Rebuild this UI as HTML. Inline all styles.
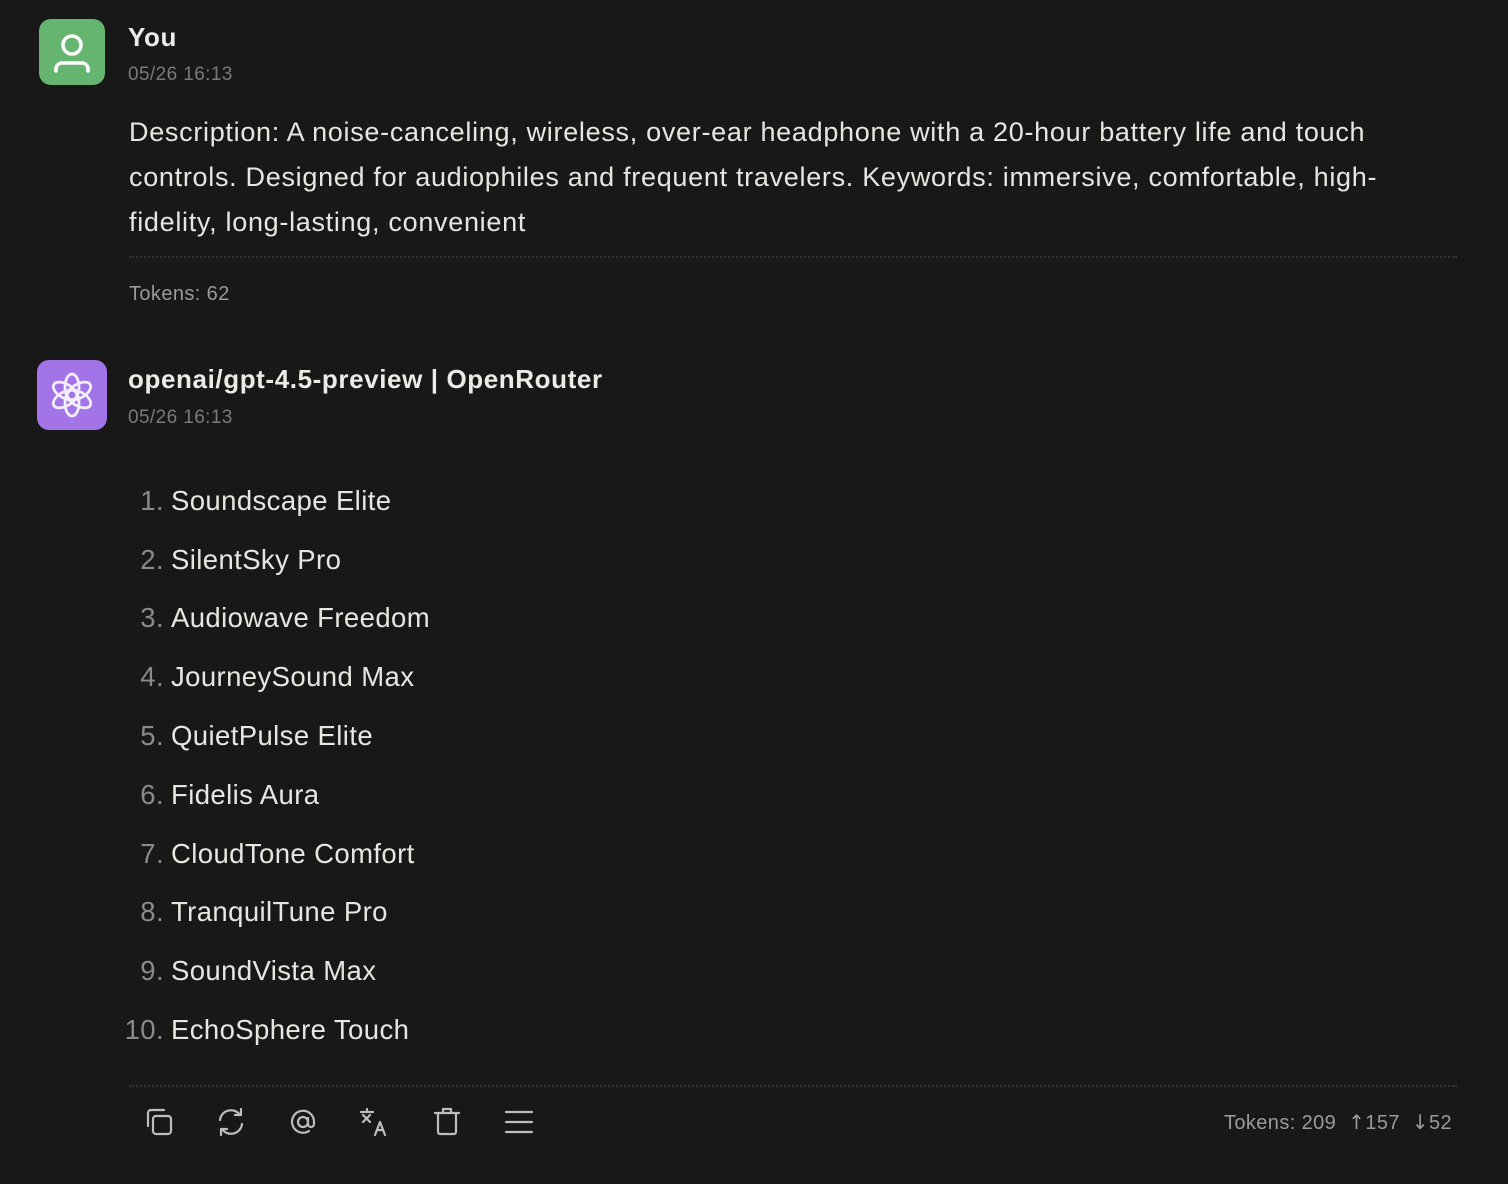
<!DOCTYPE html>
<html><head><meta charset="utf-8"><style>
html,body{margin:0;background:#181818;width:1508px;height:1184px;overflow:hidden;font-family:"Liberation Sans","DejaVu Sans",sans-serif;color:#e8e6e0}
.av{position:absolute;width:66px;height:66px;border-radius:12px}
.name{position:absolute;left:128px;font-size:26px;font-weight:bold;color:#ecebe5;letter-spacing:0.6px}
.ts{position:absolute;left:128px;font-size:19px;color:#7a7a7a;letter-spacing:0.4px}
.desc{position:absolute;left:129px;top:110px;width:1340px;font-size:27px;letter-spacing:0.7px;line-height:45px;color:#e8e6e0;white-space:nowrap}
.hr{position:absolute;left:129px;width:1328px;border-top:2px dotted #333}
.tok{position:absolute;font-size:20px;color:#9a9a9a;letter-spacing:0.4px}
.li{position:absolute;left:124px;font-size:27.5px;color:#e8e6e0;letter-spacing:0.4px}
.li span{display:inline-block;width:40px;margin-right:7px;text-align:right;color:#8a8a8a}
svg.i{position:absolute;top:1105px;width:34px;height:34px;fill:none;stroke:#bdbdbd;stroke-width:2.2;stroke-linecap:round;stroke-linejoin:round}
</style></head><body>
<div class="av" style="left:39px;top:19px;background:#65b570">
<svg width="66" height="66" viewBox="0 0 66 66" fill="none" stroke="#fff" stroke-width="3.6" stroke-linecap="round"><circle cx="33" cy="26" r="9"/><path d="M17 52 v-2 a6 6 0 0 1 6-6 h20 a6 6 0 0 1 6 6 v2"/></svg>
</div>
<div class="name" style="top:22px">You</div>
<div class="ts" style="top:64px">05/26 16:13</div>
<div class="desc">Description: A noise-canceling, wireless, over-ear headphone with a 20-hour battery life and touch<br>controls. Designed for audiophiles and frequent travelers. Keywords: immersive, comfortable, high-<br>fidelity, long-lasting, convenient</div>
<div class="hr" style="top:256px"></div>
<div class="tok" style="left:129px;top:283px">Tokens: 62</div>

<div class="av" style="left:37px;top:360px;width:70px;height:70px;background:#a274e8">
<svg width="70" height="70" viewBox="0 0 70 70" fill="none" stroke="#f3eefc" stroke-width="2.8">
<g transform="translate(35 35)">
<ellipse rx="7" ry="13" transform="rotate(0) translate(0 -8)"/>
<ellipse rx="7" ry="13" transform="rotate(60) translate(0 -8)"/>
<ellipse rx="7" ry="13" transform="rotate(120) translate(0 -8)"/>
<ellipse rx="7" ry="13" transform="rotate(180) translate(0 -8)"/>
<ellipse rx="7" ry="13" transform="rotate(240) translate(0 -8)"/>
<ellipse rx="7" ry="13" transform="rotate(300) translate(0 -8)"/>
</g></svg>
</div>
<div class="name" style="top:364px">openai/gpt-4.5-preview | OpenRouter</div>
<div class="ts" style="top:407px">05/26 16:13</div>

<div class="li" style="top:485px"><span>1.</span>Soundscape Elite</div>
<div class="li" style="top:544px"><span>2.</span>SilentSky Pro</div>
<div class="li" style="top:602px"><span>3.</span>Audiowave Freedom</div>
<div class="li" style="top:661px"><span>4.</span>JourneySound Max</div>
<div class="li" style="top:720px"><span>5.</span>QuietPulse Elite</div>
<div class="li" style="top:779px"><span>6.</span>Fidelis Aura</div>
<div class="li" style="top:838px"><span>7.</span>CloudTone Comfort</div>
<div class="li" style="top:896px"><span>8.</span>TranquilTune Pro</div>
<div class="li" style="top:955px"><span>9.</span>SoundVista Max</div>
<div class="li" style="top:1014px"><span>10.</span>EchoSphere Touch</div>

<div class="hr" style="top:1085px"></div>
<svg class="i" style="left:142px" viewBox="0 0 34 34"><rect x="11" y="11" width="18" height="18" rx="3"/><path d="M6 21 V8 a3 3 0 0 1 3-3 h13"/></svg>
<svg class="i" style="left:214px" viewBox="0 0 34 34"><path d="M6 15 a11 11 0 0 1 20-5 M28 19 a11 11 0 0 1 -20 5"/><path d="M27 4 v6 h-6 M7 30 v-6 h6"/></svg>
<svg class="i" style="left:286px" viewBox="0 0 34 34"><circle cx="17" cy="17" r="5"/><path d="M22 13 v6 a3 3 0 0 0 6 0 v-2 a11 11 0 1 0 -5 9"/></svg>
<svg class="i" style="left:358px" viewBox="0 0 34 34"><path d="M3 7 h12 M9 4 v2 M5 10 l7 7 M12 10 l-7 7 M17 30 l5 -13 l5 13 M19 25 h6"/></svg>
<svg class="i" style="left:430px" viewBox="0 0 34 34"><path d="M5 8 h24 M13 8 V4 h8 v4 M8 8 v19 a2 2 0 0 0 2 2 h14 a2 2 0 0 0 2-2 V8"/></svg>
<svg class="i" style="left:502px" viewBox="0 0 34 34"><path d="M4 7 h26 M4 17 h26 M4 27 h26"/></svg>
<div class="tok" style="right:56px;top:1110px">Tokens: 209 &nbsp;<span style="font-family:'DejaVu Sans'">↑</span>157 &nbsp;<span style="font-family:'DejaVu Sans'">↓</span>52</div>
</body></html>
